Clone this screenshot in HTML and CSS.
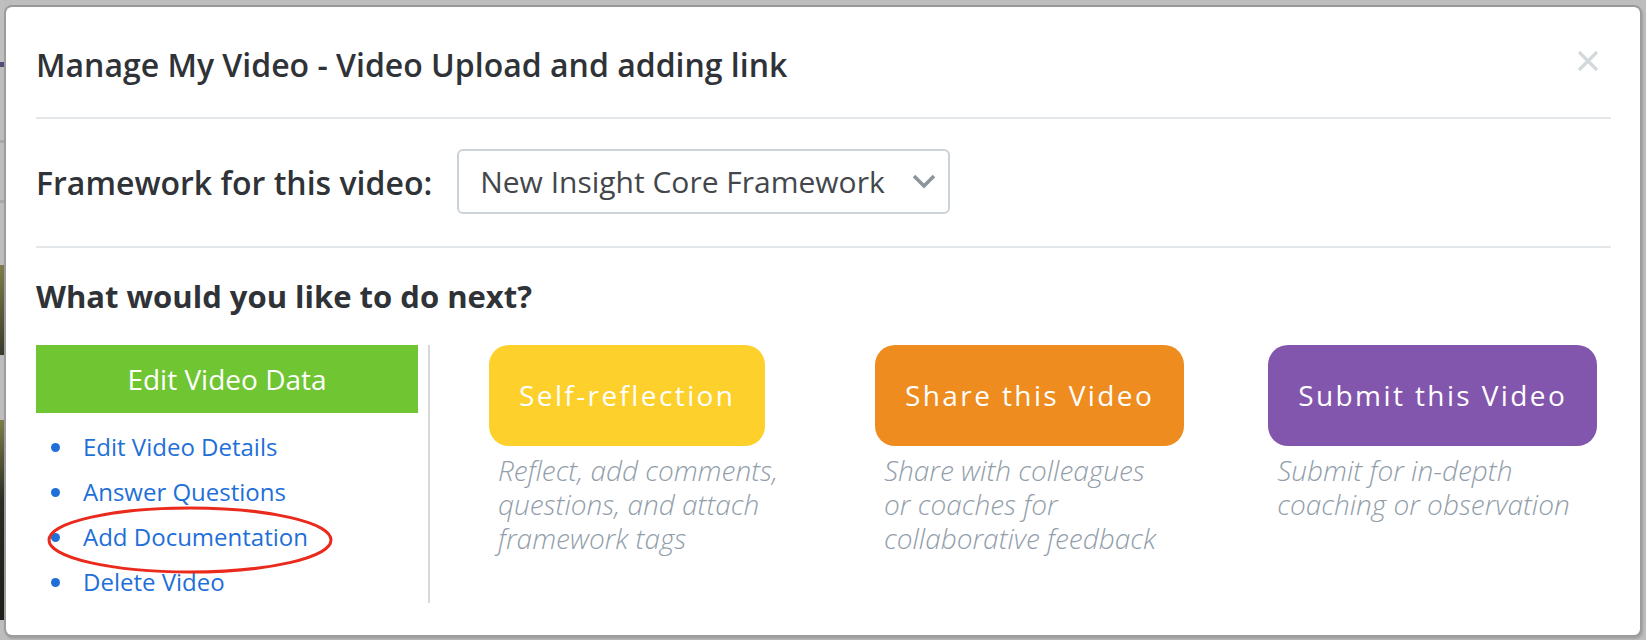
FILE: index.html
```html
<!DOCTYPE html>
<html lang="en">
<head>
<meta charset="utf-8">
<title>Manage My Video</title>
<link rel="stylesheet" href="styles.css">
</head>
<body>
<div class="modal">
  <div class="modal-header">
    <h1 class="modal-title">Manage My Video - Video Upload and adding link</h1>
    <button class="close" aria-label="Close">
      <svg width="22" height="22" viewBox="0 0 22 22"><path d="M2 2 L20 20 M20 2 L2 20" stroke="#d3d9db" stroke-width="3.2" fill="none"/></svg>
    </button>
  </div>
  <div class="framework-row">
    <span class="framework-label">Framework for this video:</span>
    <div class="select">
      <span class="select-value">New Insight Core Framework</span>
      <svg class="chevron" width="24" height="15" viewBox="0 0 24 15"><path d="M2 2 L12 12 L22 2" stroke="#8c959c" stroke-width="3.6" fill="none"/></svg>
    </div>
  </div>
  <div class="next">
    <h2 class="next-title">What would you like to do next?</h2>
    <div class="options">
      <div class="edit-col">
        <div class="edit-btn">Edit Video Data</div>
        <ul class="edit-list">
          <li><a href="#">Edit Video Details</a></li>
          <li><a href="#">Answer Questions</a></li>
          <li><a href="#">Add Documentation</a></li>
          <li><a href="#">Delete Video</a></li>
        </ul>
        <svg class="highlight" width="290" height="72" viewBox="0 0 290 72"><ellipse cx="144" cy="35" rx="141" ry="32" stroke="#ea2a1c" stroke-width="3" fill="none"/></svg>
      </div>
      <div class="actions">
        <div class="action">
          <div class="action-btn yellow">Self-reflection</div>
          <p class="action-desc">Reflect, add comments, questions, and attach framework tags</p>
        </div>
        <div class="action">
          <div class="action-btn orange">Share this Video</div>
          <p class="action-desc">Share with colleagues or coaches for collaborative feedback</p>
        </div>
        <div class="action">
          <div class="action-btn purple">Submit this Video</div>
          <p class="action-desc">Submit for in-depth coaching or observation</p>
        </div>
      </div>
    </div>
  </div>
</div>
</body>
</html>
```
FILE: styles.css
```css
* { box-sizing: border-box; }
html, body { margin: 0; padding: 0; }
body {
  width: 1646px;
  height: 640px;
  overflow: hidden;
  font-family: "Open Sans", "Liberation Sans", sans-serif;
  background-color: #bdbdbd;
  background-image: linear-gradient(to bottom,
    #bfbfbf 0, #bfbfbf 62px, #4d4f78 62px, #4d4f78 67px, #bdbdbd 67px,
    #bdbdbd 140px, #a9a9a9 140px, #a9a9a9 143px, #bdbdbd 143px,
    #bdbdbd 200px, #a9a9a9 200px, #a9a9a9 203px, #bdbdbd 203px,
    #bdbdbd 265px, #7d7e4a 265px, #3a3a2c 355px, #bdbdbd 355px,
    #bdbdbd 420px, #7d7e4a 420px, #2c2c24 500px, #1e1e1a 620px, #bdbdbd 620px);
  background-size: 4px 100%;
  background-repeat: no-repeat;
  padding: 5px 4px 0 4px;
}
.modal {
  width: 1638px;
  height: 632px;
  background: #fff;
  border: 2px solid #9c9c9c;
  border-top-color: #999;
  border-radius: 8px;
  padding: 0 29px 0 30px;
  box-shadow: 1px 2px 2px rgba(0,0,0,0.15);
}
.modal-header {
  height: 112px;
  display: flex;
  align-items: center;
  justify-content: space-between;
  border-bottom: 2px solid #e3e7ea;
  padding-top: 4px;
}
.modal-title {
  margin: 0;
  font-size: 32px;
  font-weight: 600;
  color: #2f3337;
  letter-spacing: 0;
}
.close {
  background: none;
  border: 0;
  padding: 0;
  margin: 0 12px 6px 0;
  width: 22px;
  height: 22px;
  display: flex;
}
.framework-row {
  height: 129px;
  display: flex;
  align-items: center;
  gap: 25px;
  border-bottom: 2px solid #e3e7ea;
}
.framework-label {
  font-size: 32px;
  font-weight: 600;
  color: #2f3337;
}
.select {
  width: 493px;
  height: 65px;
  border: 2px solid #cbd2d8;
  border-radius: 6px;
  display: flex;
  align-items: center;
  justify-content: space-between;
  padding: 0 12px 0 21px;
  margin-top: -2px;
}
.select-value {
  font-size: 30px;
  color: #43474b;
}
.chevron { display: block; }
.next-title {
  margin: 28px 0 29px 0;
  font-size: 31px;
  font-weight: 700;
  color: #2f3337;
  line-height: 40px;
}
.options {
  display: flex;
}
.edit-col {
  position: relative;
  width: 394px;
  height: 258px;
  border-right: 2px solid #d6d9dc;
  padding-right: 10px;
}
.edit-btn {
  height: 68px;
  background: #6fc532;
  color: #fff;
  font-size: 28px;
  display: flex;
  align-items: center;
  justify-content: center;
}
.edit-list {
  list-style: none;
  margin: 11px 0 0 0;
  padding: 0;
}
.edit-list li {
  position: relative;
  height: 45px;
  line-height: 45px;
  padding-left: 47px;
  font-size: 24px;
}
.edit-list li::before {
  content: "";
  position: absolute;
  left: 15px;
  top: 19px;
  width: 9px;
  height: 9px;
  border-radius: 50%;
  background: #1f6fd8;
}
.edit-list a {
  color: #1f6fd8;
  text-decoration: none;
}
.highlight {
  position: absolute;
  left: 10px;
  top: 160px;
}
.actions {
  display: flex;
  align-items: flex-start;
  gap: 84px;
  padding-left: 59px;
}
.action {
  display: flex;
  flex-direction: column;
  align-items: flex-start;
}
.action-btn {
  height: 101px;
  line-height: 101px;
  padding: 0 30px;
  border-radius: 20px;
  color: #fff;
  font-size: 28px;
  letter-spacing: 2.4px;
  white-space: nowrap;
}
.yellow { background: #fdd02b; }
.orange { background: #ee8c1f; }
.purple { background: #8356ad; }
.action-desc {
  margin: 7px 0 0 0;
  padding-left: 9px;
  width: 302px;
  font-size: 28px;
  font-weight: 300;
  font-style: italic;
  line-height: 34px;
  color: #929eaa;
}
```
